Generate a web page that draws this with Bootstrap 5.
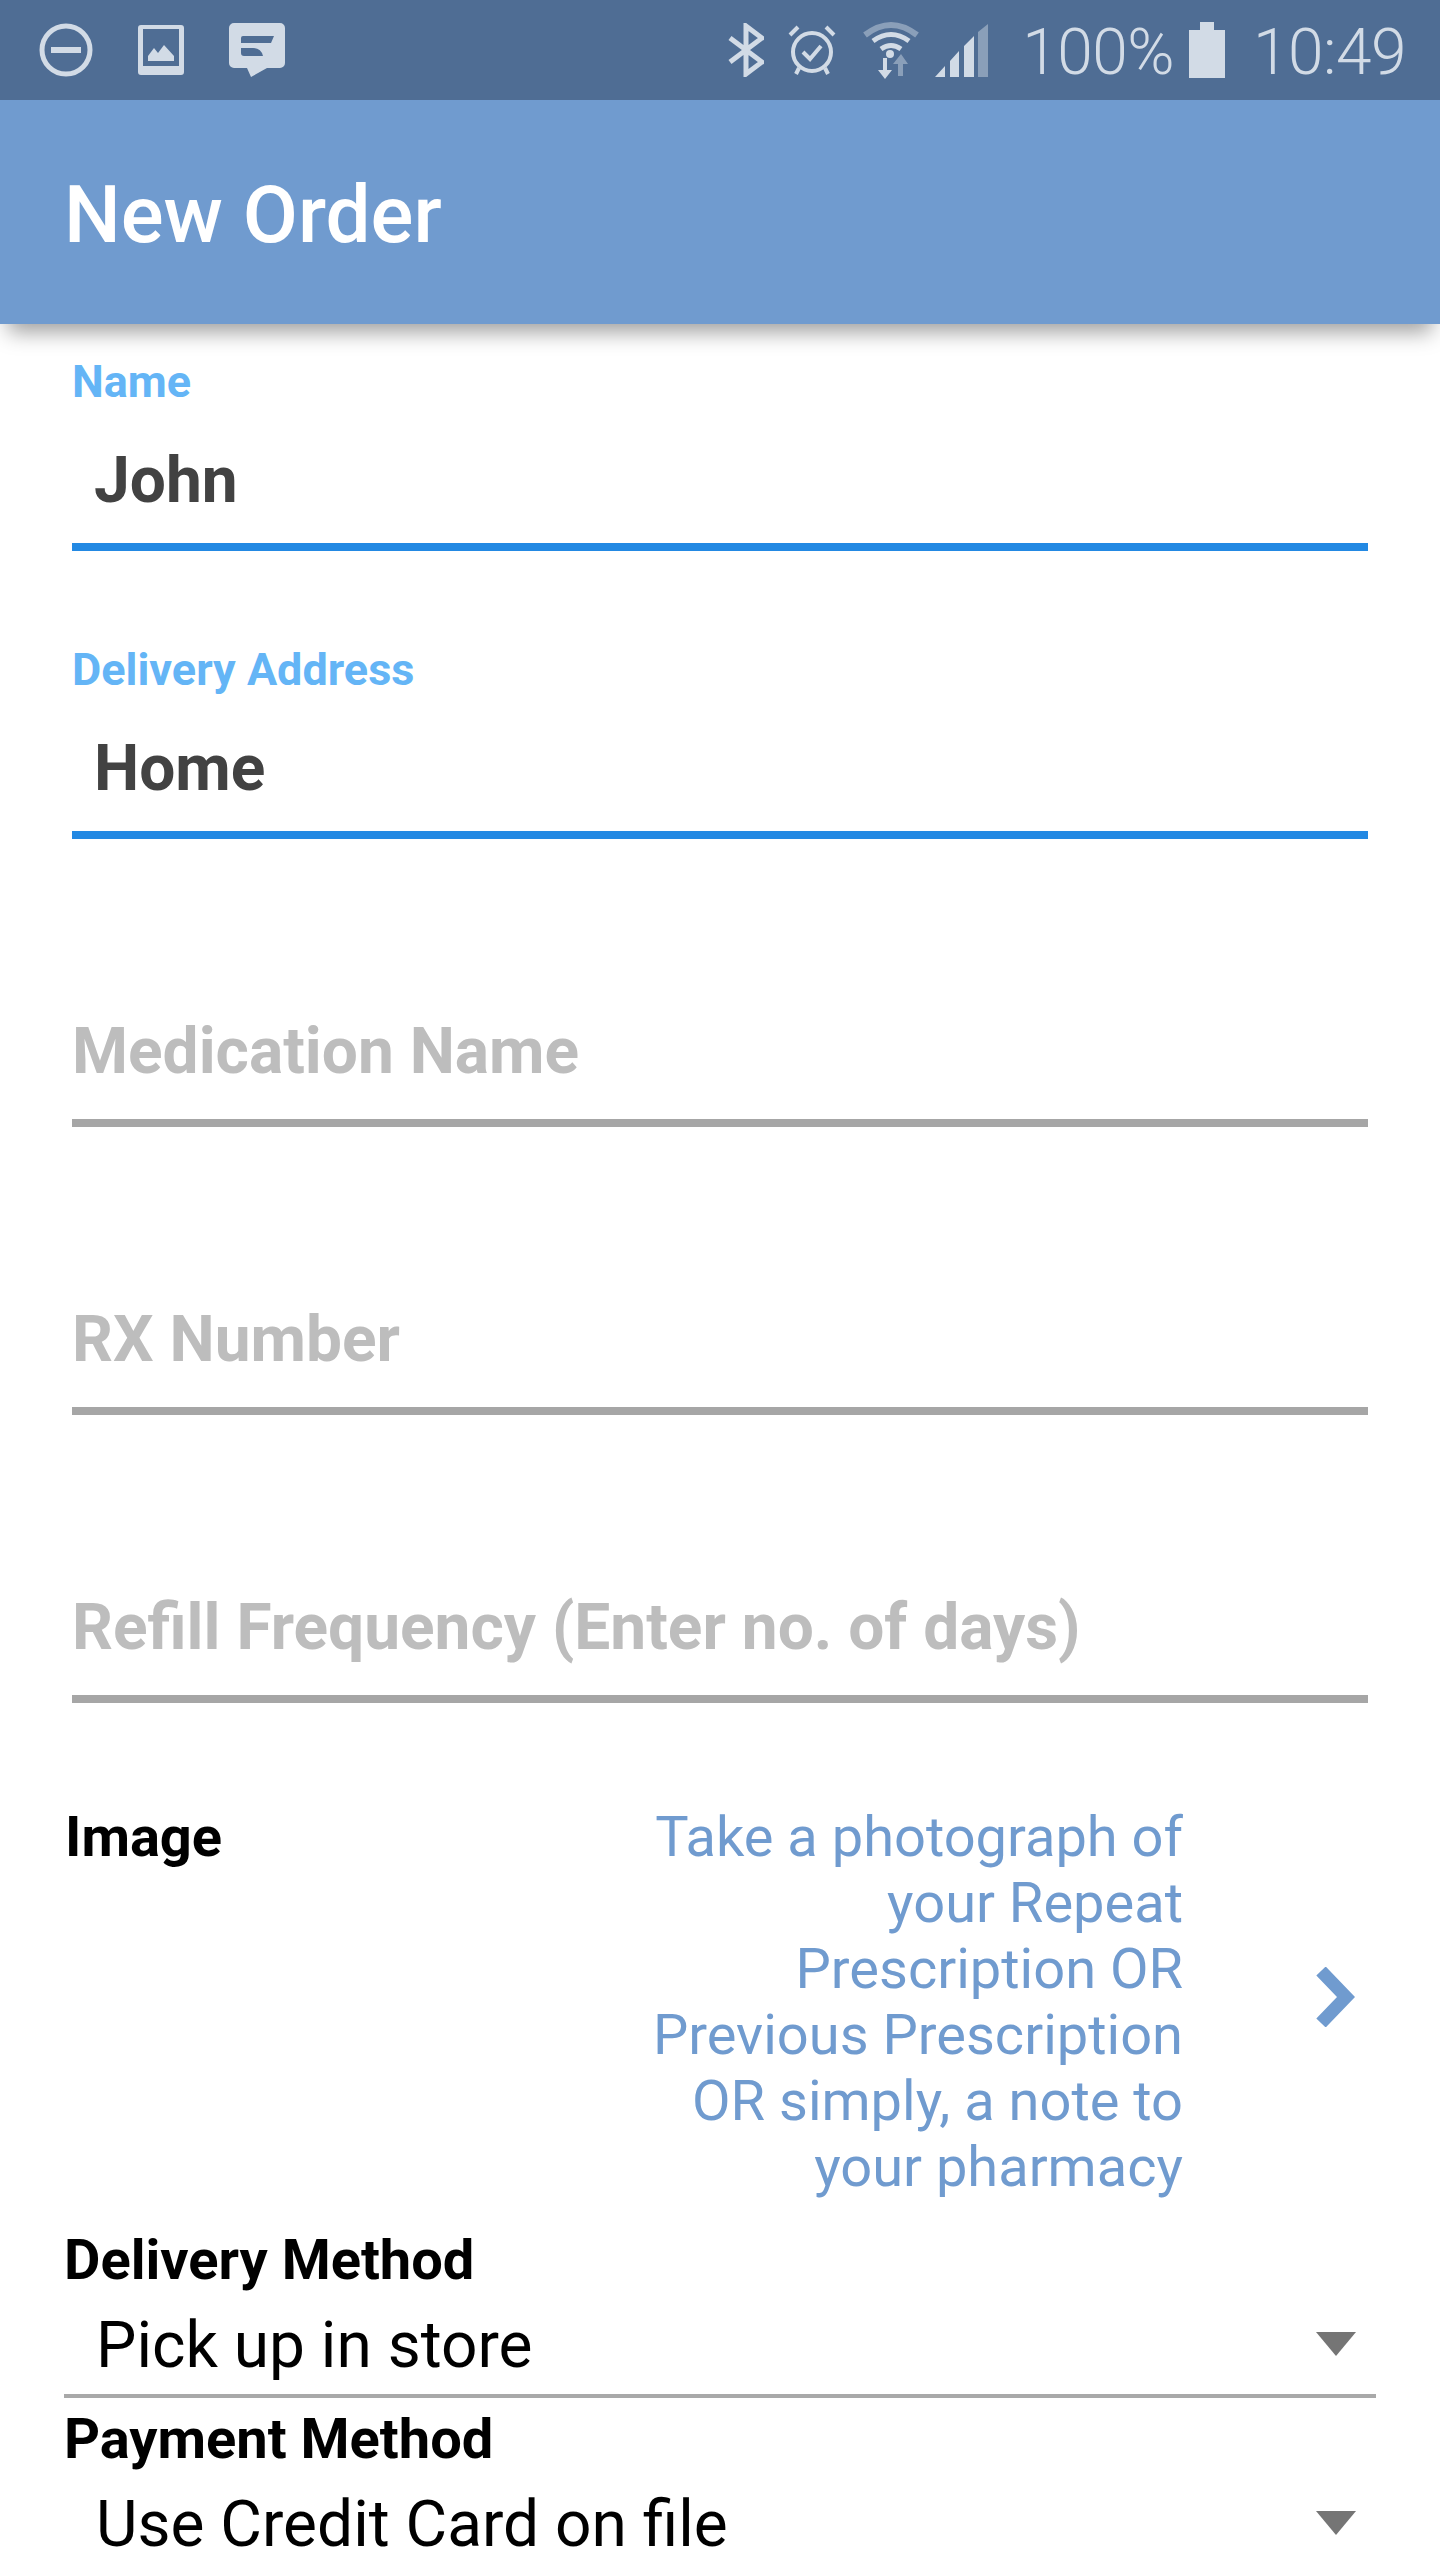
<!DOCTYPE html>
<html lang="en">
<head>
    <meta charset="UTF-8">
    <meta name="viewport" content="width=device-width, initial-scale=1.0">
    <title>New Order</title>
    <link href="https://cdn.jsdelivr.net/npm/bootstrap@5.3.0/dist/css/bootstrap.min.css" rel="stylesheet">
    <style>
        html, body { height: 2560px; overflow: hidden; background: #fff; }
        body { font-family: Roboto, "Liberation Sans", sans-serif; }
        .phone-status { height: 100px; background: #4f6d94; padding: 0 34px 0 39px; color: #d2dbe6; }
        .status-text { font-size: 64px; font-weight: 300; line-height: 1; letter-spacing: -0.5px; padding-top: 6px; }
        .sp-15 { margin-left: 15px; }
        .sp-16 { margin-left: 16px; }
        .sp-24 { margin-left: 24px; }
        .sp-27 { margin-left: 27px; }
        .sp-28 { margin-left: 28px; }
        .sp-34 { margin-left: 34px; }
        .sp-45 { margin-left: 45px; }
        .app-bar { height: 224px; background: #709bcf; padding: 6px 0 0 64px; box-shadow: 0 16px 20px -8px rgba(0, 0, 0, .38); position: relative; }
        .app-title { font-size: 80px; font-weight: 500; line-height: 1; margin: 0; }
        .order-form { padding: 0 72px; }
        .field-box { height: 288px; padding-top: 94px; }
        .field-first { height: 227px; padding-top: 33px; }
        .field-idle { padding-top: 178px; }
        .field-label { font-size: 45px; font-weight: 700; color: #64b5f6; line-height: 50px; }
        .field-value { font-size: 64px; font-weight: 700; color: #424242; line-height: 70px; padding-left: 22px; margin-top: 39px; }
        .field-hint { font-size: 64px; font-weight: 700; color: #bdbdbd; line-height: 70px; }
        .field-line { height: 8px; margin-top: 27px; background: #2389e3; }
        .line-idle { background: #a6a6a6; margin-top: 32px; }
        .image-row { padding: 0 85px 0 65px; margin-top: 101px; }
        .row-label { font-size: 56px; font-weight: 700; color: #000; line-height: 66px; }
        .image-note { width: 560px; margin-left: auto; margin-right: 132px; text-align: right; font-size: 56px; color: #709bcf; line-height: 66px; }
        .chevron-icon { margin-bottom: 10px; }
        .picker-block { padding: 0 64px; margin-top: 27px; }
        .picker-row { height: 101px; padding: 5px 20px 0 32px; font-size: 64px; color: #000; }
        .picker-rule { height: 4px; background: #a9a9a9; margin-bottom: 8px; }
    </style>
</head>
<body>
    <div class="phone-status d-flex align-items-center justify-content-between">
        <div class="d-flex align-items-center">
            <svg width="54" height="54" viewBox="0 0 54 54"><circle cx="27" cy="27" r="24" fill="none" stroke="#d2dbe6" stroke-width="5"/><rect x="12" y="24" width="30" height="6" fill="#d2dbe6"/></svg>
            <svg class="sp-45" width="46" height="50" viewBox="0 0 46 50"><path fill="#d2dbe6" fill-rule="evenodd" d="M3 0h40a3 3 0 0 1 3 3v44a3 3 0 0 1-3 3H3a3 3 0 0 1-3-3V3a3 3 0 0 1 3-3zm2 4v37h36V4z"/><path fill="#d2dbe6" d="M10 36v-5l6-8 4 5 6-8 10 11v5z"/></svg>
            <svg class="sp-45" width="56" height="54" viewBox="0 0 56 54"><path fill="#d2dbe6" fill-rule="evenodd" d="M5 0h46a5 5 0 0 1 5 5v35a5 5 0 0 1-5 5H38L22 54l-4-9H5a5 5 0 0 1-5-5V5a5 5 0 0 1 5-5zm9 13q-2 0-2 2v5h30l3-7zM12 25v5q0 3 3 3h19q-2-8-10-8z"/></svg>
        </div>
        <div class="d-flex align-items-center">
            <svg width="36" height="54" viewBox="0 0 36 54"><path fill="none" stroke="#d2dbe6" stroke-width="5" d="M2 15l32 24-16 12V3l16 12L2 39"/></svg>
            <svg class="sp-24" width="48" height="50" viewBox="0 0 48 50"><circle cx="24" cy="27" r="19" fill="none" stroke="#d2dbe6" stroke-width="4"/><path fill="none" stroke="#d2dbe6" stroke-width="4" d="M15 27l7 7 11-13M2 10L10 2M46 10L38 2M11 43l-3 6M37 43l3 6"/></svg>
            <svg class="sp-27" width="56" height="58" viewBox="0 0 56 58"><path fill="none" stroke="#d2dbe6" stroke-opacity=".45" stroke-width="6" d="M2 14q26-20 52 0"/><path fill="none" stroke="#d2dbe6" stroke-width="5" d="M10 20q18-13 36 0M18 28q10-7 20 0"/><circle cx="27" cy="33" r="4" fill="#d2dbe6"/><path fill="#d2dbe6" d="M20 37h4v12h5l-7 9-7-9h5z"/><path fill="#d2dbe6" fill-opacity=".45" d="M38 33l7 10h-5v12h-5V43h-5z"/></svg>
            <svg class="sp-16" width="53" height="53" viewBox="0 0 53 53"><path fill="#d2dbe6" d="M0 53l10-11v11zM15 37l9-10v26h-9zM29 22l10-10v41H29z"/><path fill="#d2dbe6" fill-opacity=".45" d="M43 8l10-8v53H43z"/></svg>
            <span class="status-text sp-34">100%</span>
            <svg class="sp-15" width="36" height="56" viewBox="0 0 36 56"><path fill="#d2dbe6" d="M11 0h14v8h11v48H0V8h11z"/></svg>
            <span class="status-text sp-28">10:49</span>
        </div>
    </div>
    <header class="app-bar d-flex align-items-center text-white">
        <h1 class="app-title">New Order</h1>
    </header>
    <form class="order-form">
        <div class="field-box field-first">
            <div class="field-label">Name</div>
            <div class="field-value">John</div>
            <div class="field-line"></div>
        </div>
        <div class="field-box">
            <div class="field-label">Delivery Address</div>
            <div class="field-value">Home</div>
            <div class="field-line"></div>
        </div>
        <div class="field-box field-idle"><div class="field-hint">Medication Name</div><div class="field-line line-idle"></div></div>
        <div class="field-box field-idle"><div class="field-hint">RX Number</div><div class="field-line line-idle"></div></div>
        <div class="field-box field-idle"><div class="field-hint">Refill Frequency (Enter no. of days)</div><div class="field-line line-idle"></div></div>
    </form>
    <div class="image-row d-flex align-items-center">
        <div class="row-label align-self-start">Image</div>
        <div class="image-note">Take a photograph of your Repeat Prescription OR Previous Prescription OR simply, a note to your pharmacy</div>
        <svg class="chevron-icon" width="40" height="60" viewBox="0 0 40 60"><path fill="none" stroke="#709bcf" stroke-width="13" d="M6 4l25 26L6 56"/></svg>
    </div>
    <div class="picker-block">
        <div class="row-label">Delivery Method</div>
        <div class="picker-row d-flex align-items-center justify-content-between"><span>Pick up in store</span><svg class="mb-1" width="40" height="24" viewBox="0 0 40 24"><path fill="#757575" d="M0 0h40L20 24z"/></svg></div>
        <div class="picker-rule"></div>
        <div class="row-label">Payment Method</div>
        <div class="picker-row d-flex align-items-center justify-content-between"><span>Use Credit Card on file</span><svg class="mb-1" width="40" height="24" viewBox="0 0 40 24"><path fill="#757575" d="M0 0h40L20 24z"/></svg></div>
    </div>
    <script src="https://cdn.jsdelivr.net/npm/bootstrap@5.3.0/dist/js/bootstrap.bundle.min.js"></script>
</body>
</html>
